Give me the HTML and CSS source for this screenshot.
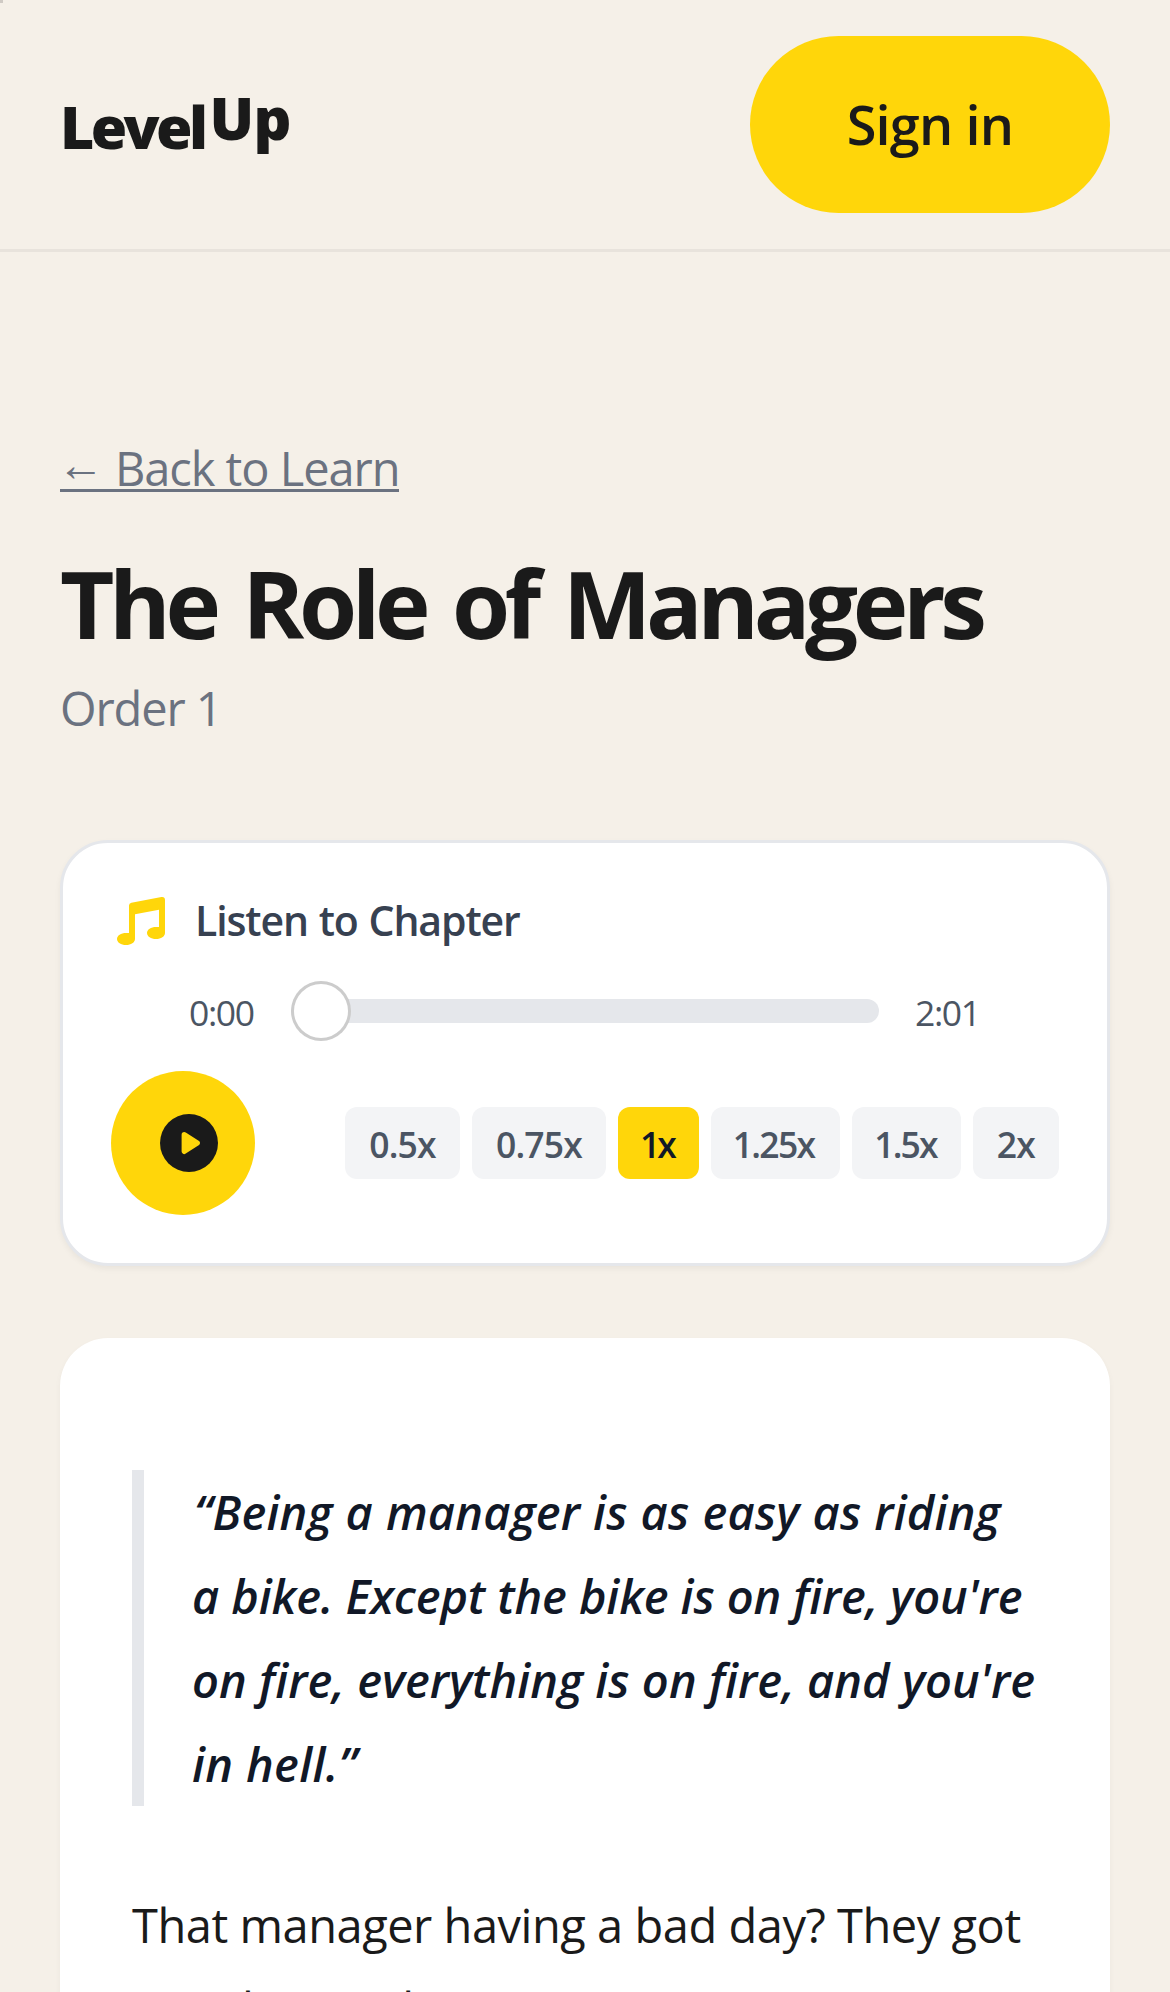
FILE: index.html
```html
<!DOCTYPE html>
<html lang="en">
<head>
<meta charset="utf-8">
<title>The Role of Managers – LevelUp</title>
<link rel="stylesheet" href="styles.css">
</head>
<body>
<span class="corner-mark"></span>
<header class="site-header">
  <a class="logo">Level<span class="logo-up">Up</span></a>
  <button class="sign-in">Sign in</button>
</header>
<main class="page">
  <a class="back-link"><span class="back-arrow">←</span>Back to Learn</a>
  <h1 class="title">The Role of Managers</h1>
  <p class="order">Order 1</p>

  <section class="player">
    <div class="player-head">
      <svg class="music-icon" viewBox="0 0 48 48" fill="currentColor">
        <path d="M12 8.6Q12 6.2 14.4 5.7L44.4 0.1Q48 -.3 48 3V36C48 39.4 44 42 39 42S30 39.4 30 36S34 30 39 30H42V12.8L18 17.2V42C18 45.4 14 48 9 48S0 45.4 0 42S4 36 9 36H12Z"/>
      </svg>
      <span class="player-label">Listen to Chapter</span>
    </div>
    <div class="timeline">
      <span class="time time-now">0:00</span>
      <div class="track"><span class="thumb"></span></div>
      <span class="time time-total">2:01</span>
    </div>
    <div class="controls">
      <button class="play">
        <svg class="play-icon" viewBox="0 0 58 58">
          <circle cx="29" cy="29" r="29" fill="#1a1a1a"/>
          <path d="M24.3 20.7L37.2 29L24.3 37.3Z" fill="#ffd60a" stroke="#ffd60a" stroke-width="5.4" stroke-linejoin="round"/>
        </svg>
      </button>
      <div class="speeds">
        <button class="speed speed-050">0.5x</button>
        <button class="speed speed-075">0.75x</button>
        <button class="speed speed-100 active">1x</button>
        <button class="speed speed-125">1.25x</button>
        <button class="speed speed-150">1.5x</button>
        <button class="speed speed-200">2x</button>
      </div>
    </div>
  </section>

  <article class="chapter">
    <blockquote class="quote"><span class="quote-open">“Being a manager is as easy as riding</span><br><span class="quote-second">a bike. Except the bike is on fire, you're</span><br>on fire, everything is on fire, and you're<br><span class="quote-close">in hell.”</span></blockquote>
    <p class="body-text">That manager having a bad day? They got<br>one thing right.</p>
  </article>
</main>
</body>
</html>
```
FILE: styles.css
```css
* { box-sizing: border-box; margin: 0; padding: 0; }

html { height: 1992px; overflow: hidden; }

body {
  height: 1992px;
  overflow: hidden;
  background: #f5f0e8;
  color: #1a1a1a;
  font-family: "Open Sans", "Noto Sans", sans-serif;
  white-space: nowrap;
}

button { border: 0; font-family: inherit; color: inherit; white-space: nowrap; }

.corner-mark {
  position: absolute;
  top: 0;
  left: 0;
  width: 3px;
  height: 3px;
  background: #cfcac4;
}

.site-header {
  height: 252px;
  padding: 0 60px;
  display: flex;
  align-items: center;
  justify-content: space-between;
  border-bottom: 3px solid #e8e3dc;
}

.logo {
  padding-top: 3px;
  font-size: 59px;
  font-weight: 800;
  line-height: 80px;
  letter-spacing: -3.6px;
}

.logo-up {
  position: relative;
  top: -9px;
  margin-left: 5px;
  letter-spacing: -0.6px;
}

.sign-in {
  width: 360px;
  height: 177px;
  padding-bottom: 1px;
  border-radius: 89px;
  background: #ffd60a;
  font-size: 54px;
  font-weight: 600;
  letter-spacing: -0.85px;
}

.page { padding: 180px 60px 0; }

.back-link {
  display: block;
  width: 339px;
  height: 60px;
  border-bottom: 3px solid #6b7280;
  font-size: 47px;
  line-height: 72px;
  letter-spacing: -1.05px;
  color: #6b7280;
}

.back-arrow {
  position: relative;
  top: -5px;
  left: -3px;
  margin-right: 9px;
}

.title {
  margin-top: 51px;
  font-size: 94px;
  font-weight: 700;
  line-height: 120px;
  letter-spacing: -5.4px;
  word-spacing: 7.8px;
}

.order {
  margin-top: 9px;
  font-size: 47px;
  line-height: 72px;
  letter-spacing: -1.1px;
  color: #6b7280;
}

.player {
  margin-top: 96px;
  padding: 47px 48px 48px;
  border: 3px solid #e5e7eb;
  border-radius: 48px;
  background: #fff;
  box-shadow: 0 3px 6px rgba(0, 0, 0, 0.05);
}

.player-head {
  height: 60px;
  padding-left: 6px;
  display: flex;
  align-items: center;
  gap: 30px;
}

.music-icon { width: 48px; height: 48px; margin-top: 2px; color: #ffd60a; }

.player-label {
  font-size: 41px;
  font-weight: 600;
  line-height: 60px;
  letter-spacing: -1.1px;
  word-spacing: 1.2px;
  color: #374151;
}

.timeline {
  height: 60px;
  margin-top: 31px;
  display: flex;
  align-items: center;
  justify-content: center;
}

.time {
  width: 66px;
  padding-top: 1px;
  font-size: 35.5px;
  line-height: 60px;
  letter-spacing: -1.4px;
  color: #4b5563;
}

.track {
  width: 588px;
  height: 24px;
  margin: 0 36px;
  display: flex;
  align-items: center;
  border-radius: 12px;
  background: #e5e7eb;
}

.thumb {
  flex: none;
  width: 60px;
  height: 60px;
  border: 3px solid rgba(0, 0, 0, 0.2);
  border-radius: 50%;
  background: #fff;
}

.controls {
  margin-top: 29px;
  display: flex;
  align-items: center;
  justify-content: space-between;
}

.play {
  width: 144px;
  height: 144px;
  padding-left: 12px;
  display: flex;
  align-items: center;
  justify-content: center;
  border-radius: 50%;
  background: #ffd60a;
}

.timeline + .controls { margin-top: 30px; }

.play-icon { width: 58px; height: 58px; }

.speeds { display: flex; gap: 12px; }

.speed {
  height: 72px;
  padding-top: 1px;
  border-radius: 12px;
  background: #f3f4f6;
  font-size: 35.5px;
  font-weight: 600;
  letter-spacing: -0.8px;
  color: #4b5563;
}

.speed-050 { width: 115px; }
.speed-075 { width: 134px; }
.speed-100 { width: 81px; padding-right: 3px; letter-spacing: -3px; }
.speed-125 { width: 129px; padding-right: 4px; letter-spacing: -1.7px; }
.speed-150 { width: 109px; padding-right: 2px; letter-spacing: -1.9px; }
.speed-200 { width: 86px; }

.speed.active { background: #ffd60a; color: #111827; }

.chapter {
  height: 900px;
  margin-top: 72px;
  padding: 132px 72px 0;
  border-radius: 48px;
  background: #fff;
  box-shadow: 0 3px 6px rgba(0, 0, 0, 0.04);
}

.quote {
  padding-left: 48px;
  border-left: 12px solid #e5e7eb;
  font-size: 47px;
  font-style: italic;
  font-weight: 600;
  line-height: 84px;
  letter-spacing: 0.05px;
  text-indent: 2px;
  color: #111827;
}

.quote-open { letter-spacing: 0.2px; word-spacing: 0.5px; }
.quote-second { letter-spacing: -0.12px; }
.quote-close { letter-spacing: 0.35px; }

.body-text {
  margin-top: 77px;
  font-size: 47px;
  line-height: 84px;
  letter-spacing: -0.47px;
}
```
